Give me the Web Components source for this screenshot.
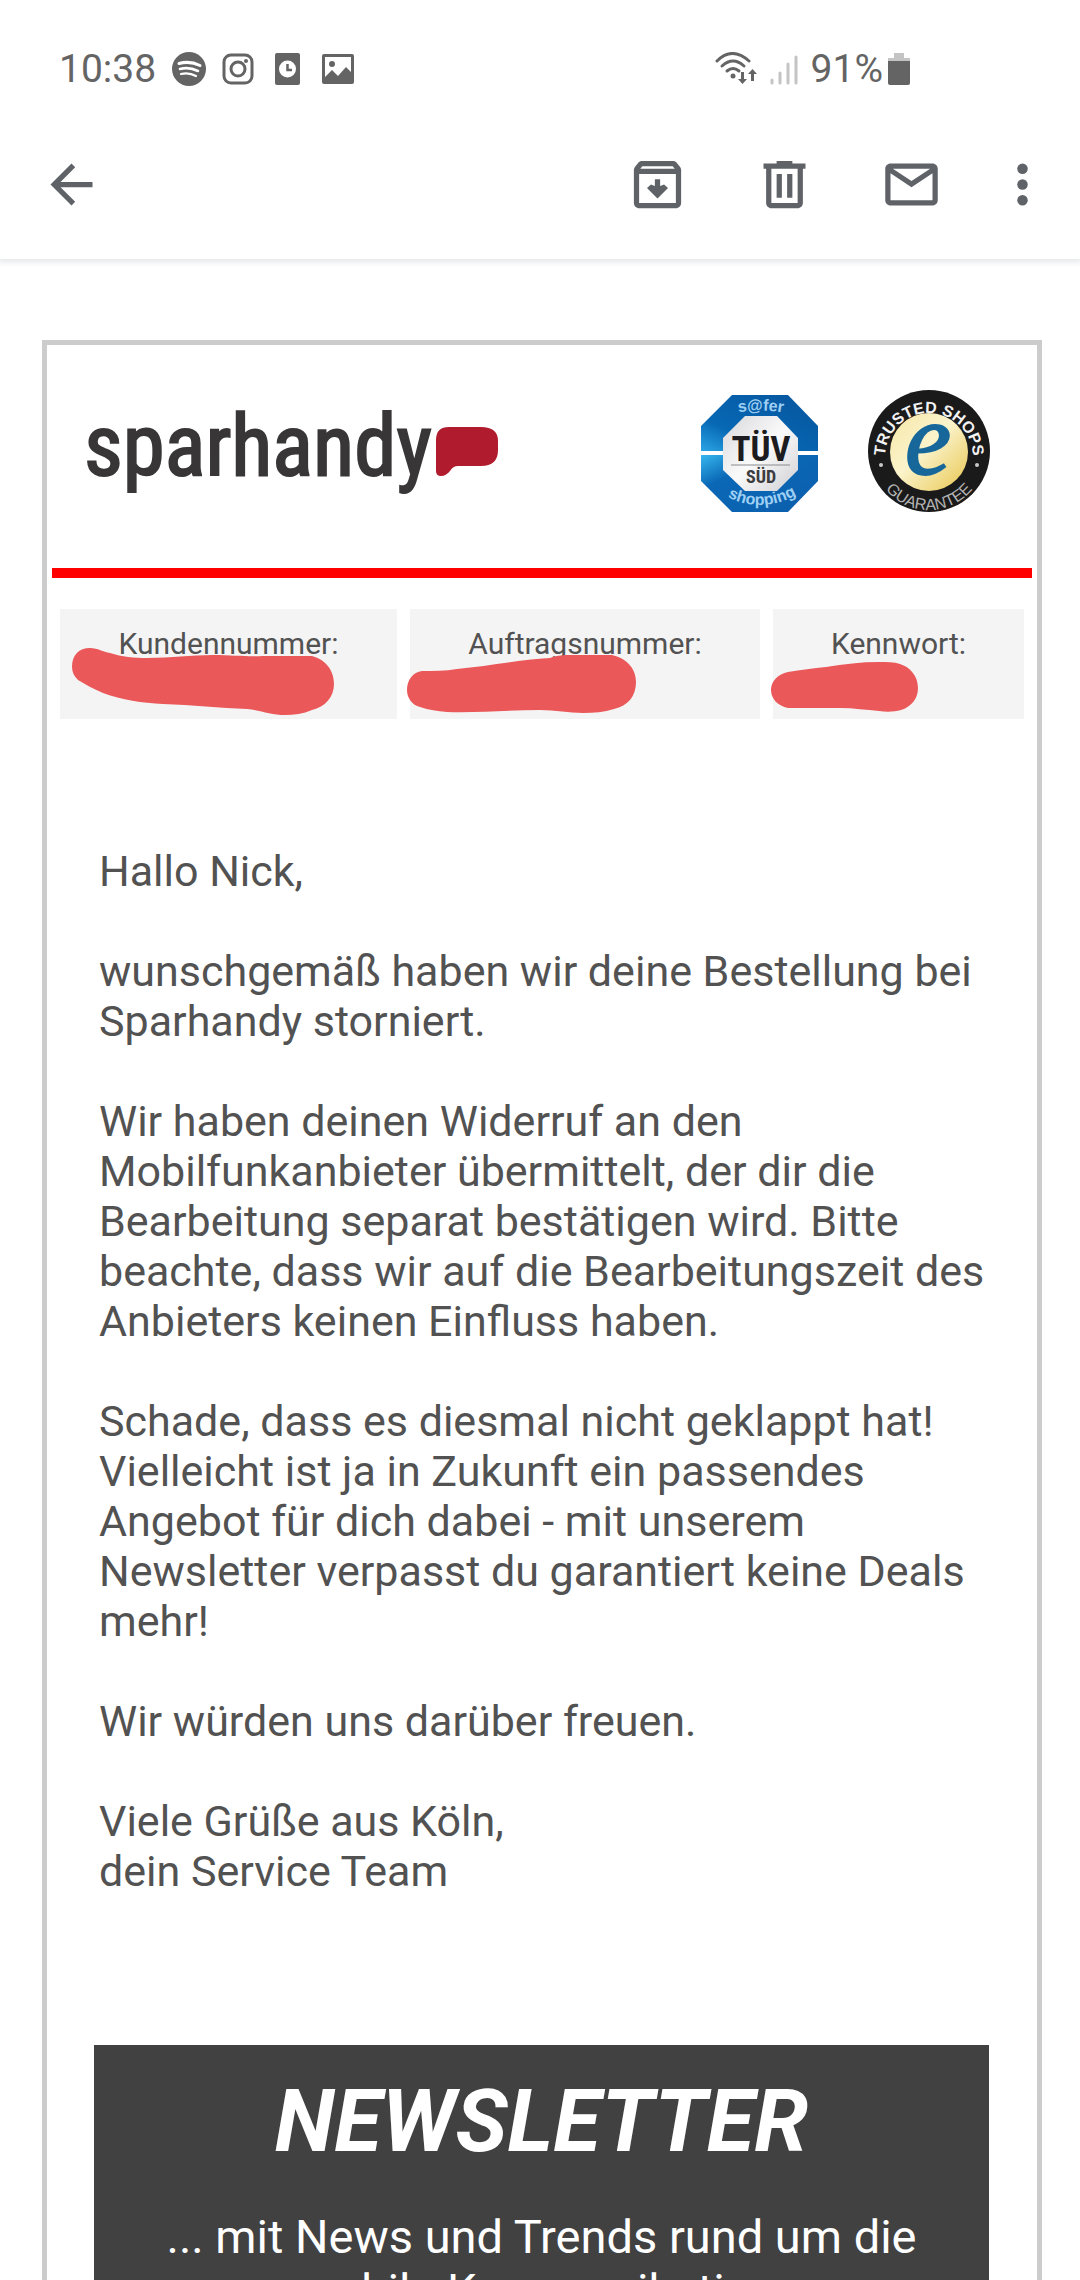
<!DOCTYPE html>
<html lang="de">
<head>
<meta charset="utf-8">
<meta name="viewport" content="width=device-width, initial-scale=1">
<title>Sparhandy</title>
<style>
    body{
        margin: 0;
        font-family: Roboto, sans-serif;
        background: #ffffff;
        color: #525252;
    }
</style>
</head>
<body>
<mail-app>
    <status-bar slot="top" time="10:38" battery="91%"></status-bar>
    <mail-toolbar slot="top"></mail-toolbar>
    <mail-message>
        <brand-header></brand-header>
        <customer-data>
            <hidden-field shape="M12 58 C12 46 19 39 30 39 C38 39 43 43 50 44 C62 48 74 49 87 49 C112 49 130 46 153 46 C174 46 188 48 203 47 L252 47 C264 50 274 60 274 75 C274 88 265 98 252 101 C243 105 234 106 225 106 C211 106 200 101 187 100 C160 99 132 96 103 95 C82 94 62 91 43 84 C34 80 26 76 18 71 C14 67 12 63 12 58 Z">Kundennummer:</hidden-field>
            <hidden-field shape="M-3 81 C-3 71 3 63 12 62 C24 62 35 62 47 60 C78 57 108 51 140 49 C148 46 154 46 161 46 L202 46 C216 49 226 59 226 73 C226 87 218 97 204 100 C194 103 184 104 173 104 C159 104 145 101 130 101 C100 101 68 104 37 103 C27 102 19 101 10 98 C2 96 -3 89 -3 81 Z">Auftragsnummer:</hidden-field>
            <hidden-field shape="M-2 81 C-2 72 5 65 15 63 C28 61 40 59 53 58 C71 55 88 53 106 53 C114 53 121 53 127 55 C137 58 145 67 145 79 C145 90 138 98 128 101 C121 103 113 103 106 102 C93 101 81 99 67 99 L15 99 C5 97 -2 90 -2 81 Z">Kennwort:</hidden-field>
        </customer-data>
        <mail-text>
            <p>Hallo Nick,</p>
            <p>wunschgemäß haben wir deine Bestellung bei Sparhandy storniert.</p>
            <p>Wir haben deinen Widerruf an den Mobilfunkanbieter übermittelt, der dir die Bearbeitung separat bestätigen wird. Bitte beachte, dass wir auf die Bearbeitungszeit des Anbieters keinen Einfluss haben.</p>
            <p>Schade, dass es diesmal nicht geklappt hat! Vielleicht ist ja in Zukunft ein passendes Angebot für dich dabei - mit unserem Newsletter verpasst du garantiert keine Deals mehr!</p>
            <p>Wir würden uns darüber freuen.</p>
            <p>Viele Grüße aus Köln,<br>dein Service Team</p>
        </mail-text>
        <newsletter-teaser>
            <span slot="title">NEWSLETTER</span>
            ... mit News und Trends rund um die mobile Kommunikation.
        </newsletter-teaser>
    </mail-message>
</mail-app>

<script>
class MailApp extends HTMLElement{
    constructor(){
        super();
        this.shadowDOM = this.attachShadow({mode: 'open'});
    }
    connectedCallback(){
        this.render();
    }
    render(){
        this.shadowDOM.innerHTML = `
        <style>
        :host{
            display: flex;
            flex-direction: column;
            height: 100vh;
            overflow: hidden;
        }
        .top{
            flex: none;
            position: relative;
            box-shadow: 0 1px 6px 2px #e4e6e9;
        }
        main{
            flex: 1;
            min-height: 0;
            overflow-y: auto;
            scrollbar-width: none;
        }
        </style>
        <header class="top"><slot name="top"></slot></header>
        <main><slot></slot></main>
        `;
    }
}

class StatusBar extends HTMLElement{
    constructor(){
        super();
        this.shadowDOM = this.attachShadow({mode: 'open'});
    }
    connectedCallback(){
        this.render();
    }
    render(){
        this.shadowDOM.innerHTML = `
        <style>
        :host{
            display: block;
            background: #ffffff;
            color: #646464;
            font-size: 39px;
            line-height: 84px;
        }
        .bar{
            display: flex;
            justify-content: space-between;
            padding: 27px 170px 0 59px;
        }
        .group{
            display: flex;
            align-items: center;
        }
        .apps{
            gap: 16px;
        }
        .signals{
            gap: 13px;
        }
        .battery{
            display: flex;
            align-items: center;
            gap: 5px;
        }
        svg{
            display: block;
            fill: currentColor;
        }
        </style>
        <div class="bar">
            <div class="group apps">
                <span>${this.getAttribute('time')}</span>
                <svg width="34" height="34" viewBox="0 0 34 34">
                    <circle cx="17" cy="17" r="17"/>
                    <g fill="none" stroke="#ffffff" stroke-linecap="round">
                        <path d="M7 11.5 Q18 8.500 28 13.500" stroke-width="3"/>
                        <path d="M8 17 Q17 14.500 26 19" stroke-width="2.600"/>
                        <path d="M9 22 Q17 20 24 24" stroke-width="2.200"/>
                    </g>
                </svg>
                <svg width="32" height="32" viewBox="0 0 32 32">
                    <rect x="2" y="2" width="28" height="28" rx="7" fill="none" stroke="currentColor" stroke-width="3"/>
                    <circle cx="16" cy="16" r="7" fill="none" stroke="currentColor" stroke-width="3"/>
                    <circle cx="24" cy="8" r="2"/>
                </svg>
                <svg width="36" height="32" viewBox="0 0 36 32">
                    <rect x="5" y="0" width="25" height="32" rx="2"/>
                    <circle cx="17.500" cy="16" r="8.500" fill="#ffffff"/>
                    <path d="M17.500 11 V17 H22" fill="none" stroke="currentColor" stroke-width="2.500"/>
                </svg>
                <svg width="32" height="30" viewBox="0 0 32 30">
                    <path fill-rule="evenodd" d="M2 0 H30 Q32 0 32 2 V28 Q32 30 30 30 H2 Q0 30 0 28 V2 Q0 0 2 0 Z M3 3 V23 L10 16 L16 22 L24 13 L29 18 V3 Z"/>
                    <circle cx="10" cy="10" r="3"/>
                </svg>
            </div>
            <div class="group signals">
                <svg width="42" height="34" viewBox="0 0 42 34">
                    <g fill="none" stroke="currentColor" stroke-width="3" stroke-linecap="round">
                        <path d="M2 9 Q17 -6 34 9"/>
                        <path d="M7 14 Q18 4 29 14"/>
                        <path d="M12 19 Q18 14 24 19"/>
                    </g>
                    <circle cx="18" cy="24" r="2.500"/>
                    <path d="M26 20 H29 V27 H32 L27.500 32 L23 27 H26 Z M36 29 V22 H33 L37.500 17 L42 22 H39 V29 Z"/>
                </svg>
                <svg width="28" height="34" viewBox="0 0 28 34">
                    <g stroke="#c4c4c4" stroke-width="3" stroke-linecap="round">
                        <path d="M2 28 V31 M10 21 V31 M18 12 V31 M26 5 V31"/>
                    </g>
                </svg>
                <div class="battery">
                    <span>${this.getAttribute('battery')}</span>
                    <svg width="22" height="34" viewBox="0 0 22 34">
                        <path d="M6 1 H16 V6 H22 V9 H0 V6 H6 Z" fill="#c4c4c4"/>
                        <path d="M0 9 H22 V31 Q22 33 20 33 H2 Q0 33 0 31 Z"/>
                    </svg>
                </div>
            </div>
        </div>
        `;
    }
}

class MailToolbar extends HTMLElement{
    constructor(){
        super();
        this.shadowDOM = this.attachShadow({mode: 'open'});
    }
    connectedCallback(){
        this.render();
    }
    render(){
        this.shadowDOM.innerHTML = `
        <style>
        :host{
            display: block;
            background: #ffffff;
        }
        nav{
            display: flex;
            align-items: center;
            padding: 0 10px 0 8px;
        }
        button{
            border: none;
            background: none;
            color: #5f6368;
            padding: 42px 32px 43px;
        }
        button.more{
            padding-inline: 16px;
        }
        .space{
            flex-grow: 1;
        }
        svg{
            display: block;
            width: 63px;
            height: 63px;
            fill: currentColor;
        }
        </style>
        <nav>
            <button type="button" aria-label="Zurück">
                <svg viewBox="0 0 24 24"><path d="M20 11H7.830l5.590-5.590L12 4l-8 8 8 8 1.410-1.410L7.830 13H20v-2z"/></svg>
            </button>
            <div class="space"></div>
            <button type="button" aria-label="Archivieren">
                <svg viewBox="0 0 24 24"><path fill-rule="evenodd" d="M20.540 5.230l-1.390-1.680C18.880 3.210 18.470 3 18 3H6c-.470 0-.880.210-1.160.550L3.460 5.230C3.170 5.570 3 6.020 3 6.500V19c0 1.100.900 2 2 2h14c1.100 0 2-.900 2-2V6.500c0-.480-.170-.930-.460-1.270zM6.240 5h11.520l.830 1H5.420l.820-1zM5 19V8h14v11H5zM11 10h2v2.600l1.500-.600L16 13.300l-4 4-4-4L9.500 12l1.500.600z"/></svg>
            </button>
            <button type="button" aria-label="Löschen">
                <svg viewBox="0 0 24 24"><path fill-rule="evenodd" d="M15 4V3H9v1H4v2h1v13c0 1.100.900 2 2 2h10c1.100 0 2-.900 2-2V6h1V4h-5zm2 15H7V6h10v13zM9 8h2v9H9zM13 8h2v9h-2z"/></svg>
            </button>
            <button type="button" aria-label="Als ungelesen markieren">
                <svg viewBox="0 0 24 24"><path fill-rule="evenodd" d="M20 4H4c-1.100 0-2 .900-2 2v12c0 1.100.900 2 2 2h16c1.100 0 2-.900 2-2V6c0-1.100-.900-2-2-2zM4 18V7.700l8 5.300 8-5.300V18H4zM12 10.700L4.900 6h14.200z"/></svg>
            </button>
            <button type="button" class="more" aria-label="Mehr">
                <svg viewBox="0 0 24 24"><circle cx="12" cy="6" r="2"/><circle cx="12" cy="12" r="2"/><circle cx="12" cy="18" r="2"/></svg>
            </button>
        </nav>
        `;
    }
}

class MailMessage extends HTMLElement{
    constructor(){
        super();
        this.shadowDOM = this.attachShadow({mode: 'open'});
    }
    connectedCallback(){
        this.render();
    }
    render(){
        this.shadowDOM.innerHTML = `
        <style>
        :host{
            display: block;
            padding: 81px 38px 60px 42px;
        }
        article{
            border: 5px solid #cccccc;
            padding: 5px;
        }
        </style>
        <article><slot></slot></article>
        `;
    }
}

class BrandHeader extends HTMLElement{
    constructor(){
        super();
        this.shadowDOM = this.attachShadow({mode: 'open'});
    }
    connectedCallback(){
        this.render();
    }
    render(){
        this.shadowDOM.innerHTML = `
        <style>
        :host{
            display: block;
            border-bottom: 10px solid #ff0000;
        }
        .row{
            display: flex;
            align-items: flex-end;
            justify-content: space-between;
            padding: 40px 42px 56px 28px;
        }
        .seals{
            display: flex;
            align-items: flex-end;
            gap: 50px;
        }
        svg{
            display: block;
            overflow: visible;
        }
        .name{
            font: 85px "Roboto Condensed", "Liberation Sans Narrow", "Liberation Sans", sans-serif;
        }
        .tuv{
            font-family: "Roboto Condensed", "Liberation Sans Narrow", "Liberation Sans", sans-serif;
            font-weight: bold;
        }
        .ring{
            font-family: "Liberation Sans", sans-serif;
            font-weight: bold;
        }
        .e{
            font: italic 104px "Liberation Serif", serif;
        }
        </style>
        <div class="row">
            <svg width="420" height="112" viewBox="0 0 420 112">
                <text class="name" x="4" y="75" fill="#383637" stroke="#383637" stroke-width="2">sparhandy</text>
                <path d="M356 40 Q356 27 369 27 H401 Q418 27 418 41 V50 Q418 66 401 66 H378 Q373 66 370 71 Q366 76 361 76 Q356 76 356 71 Z" fill="#b01c2e"/>
            </svg>
            <div class="seals">
                <svg width="117" height="117" viewBox="0 0 117 117">
                    <defs>
                        <linearGradient id="blueTop" x1="0" y1="1" x2="1" y2="0">
                            <stop offset="0" stop-color="#2aa4e4"/>
                            <stop offset=".3" stop-color="#0768b4"/>
                            <stop offset="1" stop-color="#07549c"/>
                        </linearGradient>
                        <linearGradient id="blueBottom" x1="0" y1="0" x2="1" y2="1">
                            <stop offset="0" stop-color="#36b6ee"/>
                            <stop offset=".3" stop-color="#0a68b6"/>
                            <stop offset="1" stop-color="#0c5eac"/>
                        </linearGradient>
                        <linearGradient id="silver" x1="0" y1="0" x2="1" y2="1">
                            <stop offset="0" stop-color="#d8d8dc"/>
                            <stop offset=".5" stop-color="#fafafa"/>
                            <stop offset="1" stop-color="#cfcfd4"/>
                        </linearGradient>
                        <path id="safer" d="M30 19 Q58 12 90 19"/>
                        <path id="shopping" d="M18 97 Q59 124 104 95"/>
                    </defs>
                    <path d="M31 0 H87 L117 31 V56 H0 V31 Z" fill="url(#blueTop)"/>
                    <path d="M0 60 H117 V86 L87 117 H31 L0 86 Z" fill="url(#blueBottom)"/>
                    <path d="M44 21 H76 L97 43 V75 L76 96 H44 L22 75 V43 Z" fill="url(#silver)"/>
                    <g class="tuv">
                        <text x="60" y="66" font-size="35" text-anchor="middle" fill="#1c1c20">TÜV</text>
                        <path d="M30 70 H89" stroke="#8a8a8e" stroke-width="1"/>
                        <text x="60" y="88" font-size="18" text-anchor="middle" fill="#3c3c40">SÜD</text>
                    </g>
                    <g class="ring" fill="#9fd0f4" font-size="16">
                        <text><textPath href="#safer" startOffset="50%" text-anchor="middle">s@fer</textPath></text>
                        <text><textPath href="#shopping" startOffset="50%" text-anchor="middle">shopping</textPath></text>
                    </g>
                </svg>
                <svg width="122" height="122" viewBox="0 0 122 122">
                    <defs>
                        <linearGradient id="gold" x1="0" y1="0" x2="1" y2="1">
                            <stop offset="0" stop-color="#f6e7a8"/>
                            <stop offset=".45" stop-color="#fbf3cb"/>
                            <stop offset="1" stop-color="#e8c64e"/>
                        </linearGradient>
                        <path id="upper" d="M17 67 A44 44 0 1 1 105 67"/>
                        <path id="lower" d="M5 64 A56 56 0 0 0 117 64"/>
                    </defs>
                    <circle cx="61" cy="61" r="61" fill="#1b1a1b"/>
                    <circle cx="61" cy="62" r="39" fill="url(#gold)"/>
                    <g class="ring" font-size="16">
                        <text fill="#f2f2f2"><textPath href="#upper" startOffset="50%" text-anchor="middle">TRUSTED SHOPS</textPath></text>
                        <text fill="#b4b4b4" font-weight="normal"><textPath href="#lower" startOffset="50%" text-anchor="middle">GUARANTEE</textPath></text>
                    </g>
                    <circle cx="13" cy="75" r="2" fill="#c8c8c8"/>
                    <circle cx="109" cy="75" r="2" fill="#c8c8c8"/>
                    <text class="e" x="60" y="84" text-anchor="middle" fill="#17679a" stroke="#17679a" stroke-width="2">e</text>
                </svg>
            </div>
        </div>
        `;
    }
}

class CustomerData extends HTMLElement{
    constructor(){
        super();
        this.shadowDOM = this.attachShadow({mode: 'open'});
    }
    connectedCallback(){
        this.render();
    }
    render(){
        this.shadowDOM.innerHTML = `
        <style>
        :host{
            display: grid;
            grid-template-columns: 337fr 350fr 251fr;
            gap: 13px;
            padding: 31px 8px 0;
        }
        </style>
        <slot></slot>
        `;
    }
}

class HiddenField extends HTMLElement{
    constructor(){
        super();
        this.shadowDOM = this.attachShadow({mode: 'open'});
    }
    connectedCallback(){
        this.render();
    }
    render(){
        this.shadowDOM.innerHTML = `
        <style>
        :host{
            display: block;
            position: relative;
            background: #f4f4f4;
            padding: 17px 8px 58px;
            font-size: 30px;
            line-height: 35px;
            text-align: center;
        }
        /* marker stroke over the value */
        svg{
            position: absolute;
            top: 0;
            left: 0;
            overflow: visible;
            fill: #eb5859;
        }
        </style>
        <slot></slot>
        <svg width="10" height="10" aria-hidden="true"><path d="${this.getAttribute('shape')}"/></svg>
        `;
    }
}

class MailText extends HTMLElement{
    constructor(){
        super();
        this.shadowDOM = this.attachShadow({mode: 'open'});
    }
    connectedCallback(){
        this.render();
    }
    render(){
        this.shadowDOM.innerHTML = `
        <style>
        :host{
            display: block;
            padding: 127px 43px 149px 47px;
            font-size: 43px;
            line-height: 50px;
        }
        ::slotted(p){
            margin: 0 0 50px;
        }
        ::slotted(p:last-child){
            margin: 0;
        }
        </style>
        <slot></slot>
        `;
    }
}

class NewsletterTeaser extends HTMLElement{
    constructor(){
        super();
        this.shadowDOM = this.attachShadow({mode: 'open'});
    }
    connectedCallback(){
        this.render();
    }
    render(){
        this.shadowDOM.innerHTML = `
        <style>
        :host{
            display: block;
            margin: 0 43px 40px 42px;
            padding: 25px 40px 60px;
            background: #414141;
            color: #ffffff;
            text-align: center;
        }
        h2{
            margin: 0 0 38px;
            font-size: 87px;
            font-style: italic;
            font-weight: bold;
            line-height: 102px;
        }
        p{
            margin: 0;
            font-size: 47px;
            line-height: 54px;
        }
        </style>
        <h2><slot name="title"></slot></h2>
        <p><slot></slot></p>
        `;
    }
}

customElements.define('mail-app', MailApp);
customElements.define('status-bar', StatusBar);
customElements.define('mail-toolbar', MailToolbar);
customElements.define('mail-message', MailMessage);
customElements.define('brand-header', BrandHeader);
customElements.define('customer-data', CustomerData);
customElements.define('hidden-field', HiddenField);
customElements.define('mail-text', MailText);
customElements.define('newsletter-teaser', NewsletterTeaser);
</script>
</body>
</html>
